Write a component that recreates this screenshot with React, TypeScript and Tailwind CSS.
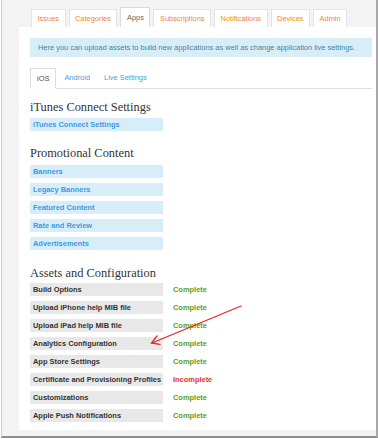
import React from "react";

const promo = ["Banners", "Legacy Banners", "Featured Content", "Rate and Review", "Advertisements"];
const assets: [string, boolean][] = [
  ["Build Options", true],
  ["Upload iPhone help MIB file", true],
  ["Upload iPad help MIB file", true],
  ["Analytics Configuration", true],
  ["App Store Settings", true],
  ["Certificate and Provisioning Profiles", false],
  ["Customizations", true],
  ["Apple Push Notifications", true],
];
const topTabs = ["Issues", "Categories", "Apps", "Subscriptions", "Notifications", "Devices", "Admin"];

export default function App() {
  return (
    <div className="relative w-[378px] h-[439px] bg-white font-['Liberation_Sans',Arial,sans-serif] text-[7.45px] leading-none">
      <div className="ml-[1px] w-[377px] h-[438px] border-l border-l-[#cfcfcf] border-r-2 border-r-[#a9a9a9] border-b-2 border-b-[#8e8e8e] bg-[#f3f3f3] pl-[17px] pt-[7px] pb-[6px] flex flex-col">
        <div className="flex items-end gap-[3px] ml-[12px] h-[20px]">
          {topTabs.map((t) =>
            t === "Apps" ? (
              <div key={t} className="h-[20px] px-[5.5px] flex items-center bg-white border border-b-0 border-[#dcdcdc] text-[#666]">
                {t}
              </div>
            ) : (
              <div key={t} className="h-[18px] px-[5.5px] flex items-center bg-white border border-b-0 border-[#e4e4e4] text-[#ee8a2c]">
                {t}
              </div>
            )
          )}
        </div>
        <div className="flex-1 bg-white pt-[11px] pl-[11px] pr-[4px]">
          <div className="h-[19px] bg-[#d9edf7] text-[#3a87ad] pl-[8px] flex items-center">
            Here you can upload assets to build new applications as well as change application live settings.
          </div>
          <div className="mt-[11px] h-[21px] flex border-b border-[#dddddd]">
            <div className="h-[21px] px-[6px] mr-[2px] flex items-center bg-white border border-[#dddddd] border-b-white text-[#555]">
              iOS
            </div>
            <div className="h-[20px] px-[6px] mr-[2px] flex items-center text-[#4a9fd8]">Android</div>
            <div className="h-[20px] px-[6px] mr-[2px] flex items-center text-[#4a9fd8]">Live Settings</div>
          </div>

          <div className="mt-[11px] font-['Liberation_Serif',serif] text-[12.4px] leading-[14px] text-[#333]">
            iTunes Connect Settings
          </div>
          <div className="mt-[4px] w-[133px] h-[13px] bg-[#d8edfa] text-[#3d9be0] font-bold pl-[3px] flex items-center">
            iTunes Connect Settings
          </div>

          <div className="mt-[15px] font-['Liberation_Serif',serif] text-[12.4px] leading-[14px] text-[#333]">
            Promotional Content
          </div>
          <div className="mt-[5px] flex flex-col gap-[5px]">
            {promo.map((p) => (
              <div key={p} className="w-[133px] h-[13px] bg-[#d8edfa] text-[#3d9be0] font-bold pl-[3px] flex items-center">
                {p}
              </div>
            ))}
          </div>

          <div className="mt-[16px] font-['Liberation_Serif',serif] text-[12.4px] leading-[14px] text-[#333]">
            Assets and Configuration
          </div>
          <div className="mt-[3px] flex flex-col gap-[5px]">
            {assets.map(([name, ok]) => (
              <div key={name} className="flex items-center">
                <div className="w-[133px] h-[13px] bg-[#e8e8e8] text-[#333] font-bold pl-[3px] flex items-center whitespace-nowrap overflow-hidden">
                  {name}
                </div>
                <div className={ok ? "ml-[10px] font-bold text-[#5aa012]" : "ml-[10px] font-bold text-[#e0313a]"}>
                  {ok ? "Complete" : "Incomplete"}
                </div>
              </div>
            ))}
          </div>
        </div>
      </div>
      <svg className="absolute left-0 top-0 pointer-events-none" width="378" height="439" viewBox="0 0 378 439">
        <g stroke="#e8232a" strokeWidth="1.3" fill="none" strokeLinecap="round">
          <line x1="241" y1="306" x2="152" y2="343" />
          <polyline points="157,336 151.5,343 160,344.3" />
        </g>
      </svg>
    </div>
  );
}
